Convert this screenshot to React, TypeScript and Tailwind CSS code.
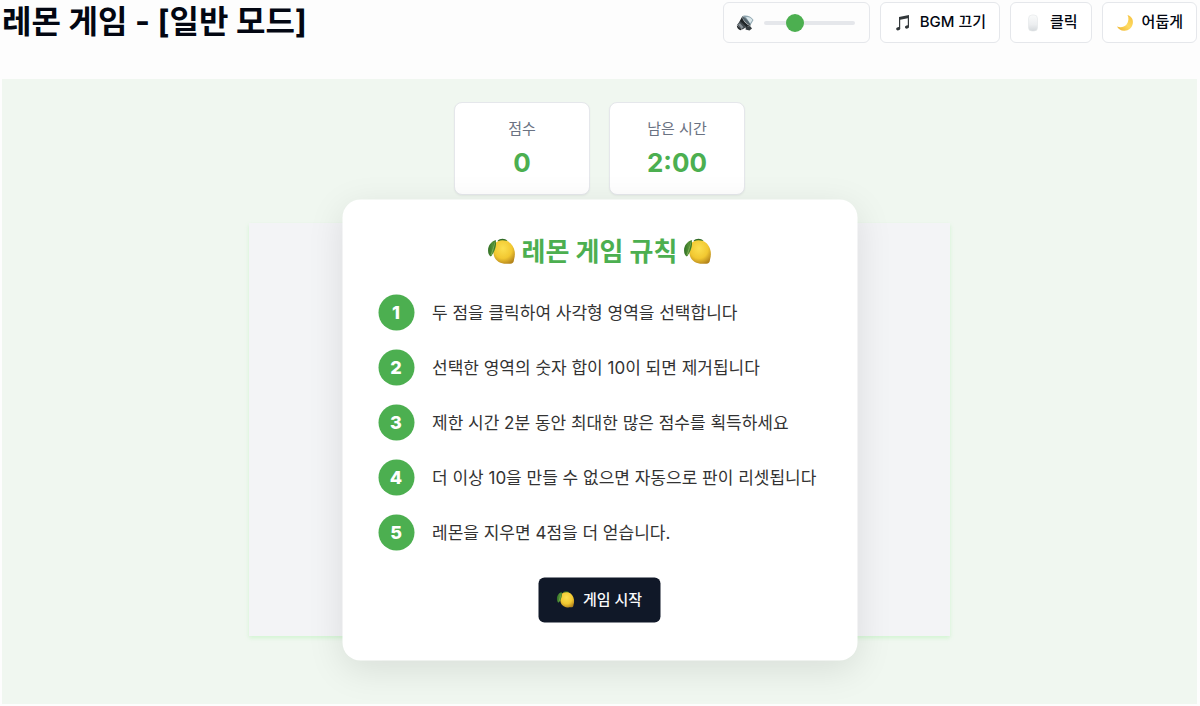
import React, { useState } from 'react'

const rules = [
  '두 점을 클릭하여 사각형 영역을 선택합니다',
  '선택한 영역의 숫자 합이 10이 되면 제거됩니다',
  '제한 시간 2분 동안 최대한 많은 점수를 획득하세요',
  '더 이상 10을 만들 수 없으면 자동으로 판이 리셋됩니다',
  '레몬을 지우면 4점을 더 얻습니다.',
]

const LemonDefs = () => (
  <svg width="0" height="0" className="absolute" aria-hidden="true">
    <defs>
      <radialGradient id="lemon" cx="0.45" cy="0.35" r="0.7">
        <stop offset="0" stopColor="#fce050" />
        <stop offset="0.6" stopColor="#f2c831" />
        <stop offset="1" stopColor="#b5851c" />
      </radialGradient>
      <linearGradient id="leaf" x1="0" y1="0" x2="1" y2="0">
        <stop offset="0" stopColor="#2f6f24" />
        <stop offset="0.6" stopColor="#569338" />
        <stop offset="1" stopColor="#2c6b20" />
      </linearGradient>
    </defs>
  </svg>
)

const Lemon = ({ className }: { className: string }) => (
  <svg viewBox="0 0 28 28" className={className} aria-hidden="true">
    <path d="M10 3.500C12 .8 17.500.3 20 3.500L14 6Z" fill="#2f6a26" />
    <path
      d="M7.500 6C9.500 3 14.500 1.800 19 3.300c4.500 1.500 7.500 6 8.200 10.700.4 3 .1 5.500-.6 7.800-.3 1.500-.2 2.500-1.200 3.400-1.400 1.200-3.200.9-5 1C14.500 26.800 8.500 24.500 6.500 18.500 5.300 14 5.500 9.500 7.500 6Z"
      fill="url(#lemon)"
    />
    <path d="M8.200 2.500C3.500 4 .3 8.500.6 13.500c.1 2.800 1 4.500 2.700 5.500C6.700 16 9.400 8.500 8.200 2.500Z" fill="url(#leaf)" />
    <path d="M7.700 4C6.500 9 5 13.500 3.500 17.500" stroke="#a5cc75" strokeWidth="0.5" fill="none" />
  </svg>
)

const Speaker = () => (
  <svg viewBox="0 0 18 18" className="h-[18px] w-[18px]" aria-hidden="true">
    <path d="M7 1.800C11 1 15 2.500 17.500 6L14.500 11Z" fill="#8fa6b0" />
    <path d="M10 3c3-.3 5 .8 6.500 3L14 9.500Z" fill="#d9e6ea" />
    <path d="M6.300 2C8.500 2.500 14.500 9 14.800 11.500c-2.500.4-9.500-6.500-8.500-9.500Z" fill="#56656d" />
    <path d="M6.200 2.400c-.4 3.300 5 9 8.300 9.400l-5 1.700L3.500 7.500Z" fill="#1f2528" />
    <path d="M4 7 10.500 13 6.500 15.500 1 11Z" fill="#41494e" />
    <path d="m2 10.500 2-1.300 3.500 4-1.800 1.300Z" fill="#899298" />
    <path d="M.8 11.500c2 .5 4 2.500 5 4.500-2.500.7-5-1.500-5-4.500Z" fill="#24292c" />
    <path d="M10 13 14 12l2 2.500-2.500 2-4-1Z" fill="#343b3f" />
  </svg>
)

const MusicNote = () => (
  <svg viewBox="0 0 18 18" className="h-[18px] w-[18px]" aria-hidden="true">
    <path d="M5 3 15 1v3L5 6Z" fill="#33383b" />
    <path d="M5.600 4v10.500M14.400 3v9.800" stroke="#33383b" strokeWidth="1.200" />
    <ellipse cx="4.200" cy="14.700" rx="2.100" ry="1.600" transform="rotate(-15 4.200 14.700)" fill="#33383b" />
    <ellipse cx="13" cy="13" rx="2.100" ry="1.600" transform="rotate(-15 13 13)" fill="#33383b" />
  </svg>
)

const Mouse = () => (
  <svg viewBox="0 0 18 18" className="h-[18px] w-[18px]" aria-hidden="true">
    <defs>
      <linearGradient id="mouse" x1="0" y1="0" x2="0" y2="1">
        <stop offset="0" stopColor="#fafbfb" />
        <stop offset="0.6" stopColor="#eceef0" />
        <stop offset="1" stopColor="#d5d9dc" />
      </linearGradient>
    </defs>
    <rect x="4.500" y="1" width="9" height="16" rx="3.500" fill="url(#mouse)" stroke="#e3e6e8" strokeWidth="0.600" />
  </svg>
)

const Moon = () => (
  <svg viewBox="0 0 18 18" className="h-[18px] w-[18px]" aria-hidden="true">
    <defs>
      <linearGradient id="moon" x1="0" y1="1" x2="1" y2="0">
        <stop offset="0" stopColor="#edb22f" />
        <stop offset="0.5" stopColor="#ffdc63" />
        <stop offset="1" stopColor="#f4bf3d" />
      </linearGradient>
    </defs>
    <path
      d="M11.500 1c4 1.200 6 4.500 5.300 8.500-.8 4.700-4.500 7.500-8.800 7.200-3.200-.2-5.700-1.800-7-4.300 3.500 1.500 7 .8 9.500-2C12.700 7.700 13 4 11.500 1Z"
      fill="url(#moon)"
    />
  </svg>
)

const boxStyle = 'flex h-[41px] items-center rounded-md border border-gray-200'
const buttonStyle = `${boxStyle} gap-2 bg-white px-[13px] text-[15px] font-medium text-gray-950`

const ScoreCard = ({ label, value }: { label: string; value: string }) => (
  <div className="flex h-[93px] w-[136px] flex-col items-center rounded-lg border border-gray-200 bg-white pt-3.5 shadow-xs">
    <span className="text-[15px] leading-6 text-gray-500">{label}</span>
    <span className="mt-1 text-[26px] leading-9 font-bold text-[#4caf50]">{value}</span>
  </div>
)

const Header = () => {
  const [volume, setVolume] = useState(30)

  return (
    <header className="flex flex-wrap items-start justify-between">
      <h1 className="text-[32px] leading-10 font-bold text-gray-950">레몬 게임 - [일반 모드]</h1>
      <div className="flex flex-wrap gap-2.5">
        <div className={`${boxStyle} gap-2.5 px-3`}>
          <Speaker />
          <input
            type="range"
            aria-label="음량"
            value={volume}
            onChange={(e) => setVolume(Number(e.target.value))}
            className="mr-0.5 h-1 w-[91px] appearance-none rounded-full bg-gray-200 [&::-webkit-slider-thumb]:h-[18px] [&::-webkit-slider-thumb]:w-[18px] [&::-webkit-slider-thumb]:appearance-none [&::-webkit-slider-thumb]:rounded-full [&::-webkit-slider-thumb]:bg-[#4caf50]"
          />
        </div>
        <button className={buttonStyle}>
          <MusicNote />
          BGM 끄기
        </button>
        <button className={buttonStyle}>
          <Mouse />
          클릭
        </button>
        <button className={buttonStyle}>
          <Moon />
          어둡게
        </button>
      </div>
    </header>
  )
}

const RulesDialog = () => (
  <section
    aria-labelledby="rules-title"
    className="absolute top-1/2 left-1/2 flex w-[515px] max-w-full -translate-x-1/2 -translate-y-1/2 flex-col items-center rounded-[18px] bg-white px-9 pt-9 pb-[38px] shadow-[0_9px_36px_rgba(0,0,0,0.1)]"
  >
    <h2 id="rules-title" className="flex items-center gap-1.5 text-[26px] leading-8 font-bold text-[#4caf50]">
      <Lemon className="h-7 w-7" />
      레몬 게임 규칙
      <Lemon className="h-7 w-7" />
    </h2>
    <ol className="mt-[27px] flex flex-col gap-[19px] self-stretch">
      {rules.map((rule, i) => (
        <li key={rule} className="flex items-center gap-[18px]">
          <span className="flex h-9 w-9 shrink-0 items-center justify-center rounded-full bg-[#4caf50] text-lg font-extrabold text-white">
            {i + 1}
          </span>
          <span className="text-[17px] leading-7 whitespace-nowrap text-[#333333]">{rule}</span>
        </li>
      ))}
    </ol>
    <button className="mt-[27px] flex h-[45px] items-center gap-2 rounded-md bg-gray-900 px-[18px] text-[15px] font-medium text-gray-50">
      <Lemon className="h-[18px] w-[18px]" />
      게임 시작
    </button>
  </section>
)

const App = () => {
  return (
    <div className="min-h-screen bg-[#fdfdfd] py-0.5 pr-[3px] pl-0.5 font-['Inter','Noto_Sans_CJK_KR',sans-serif]">
      <LemonDefs />
      <Header />
      <main className="mt-9 flex flex-col items-center bg-[#f0f7f0] pt-[23px] pb-[68px]">
        <div className="flex gap-[19px]">
          <ScoreCard label="점수" value="0" />
          <ScoreCard label="남은 시간" value="2:00" />
        </div>
        <div className="relative mt-7 h-[413px] w-full max-w-[701px] bg-gray-100 shadow-[0_2px_4px_rgba(144,238,144,0.3)]">
          <RulesDialog />
        </div>
      </main>
    </div>
  )
}

export default App
